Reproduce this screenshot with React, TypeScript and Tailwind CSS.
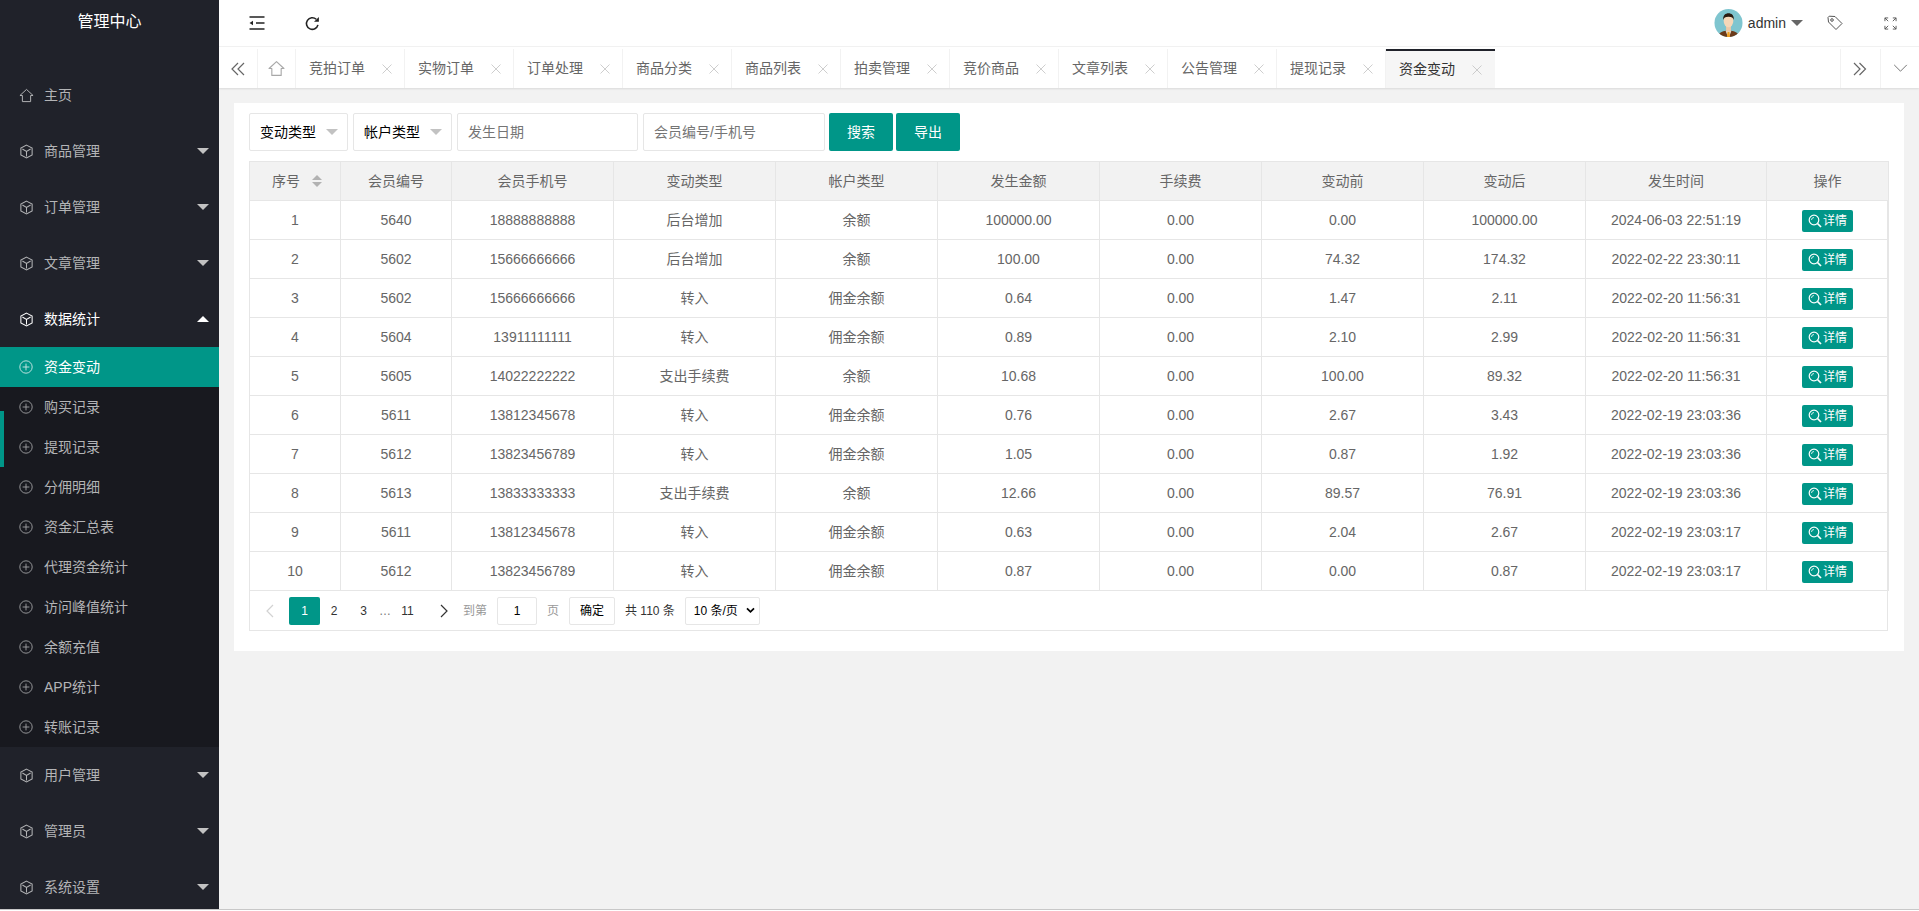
import React from "react";

const FONT = '"Liberation Sans","Noto Sans CJK SC",sans-serif';

function Cube({ className = "" }: { className?: string }) {
  return (
    <svg viewBox="0 0 16 16" className={"w-[14px] h-[15px] " + className} fill="none" stroke="currentColor" strokeWidth="1.1">
      <path d="M8 1.2 14 4.4V11.6L8 14.8 2 11.6V4.4Z" />
      <path d="M3.6 5.4 8 8l4.4-2.6M8 8v5.4" />
    </svg>
  );
}
function Plus({ className = "" }: { className?: string }) {
  return (
    <svg viewBox="0 0 14 14" className={"w-[14px] h-[14px] " + className} fill="none" stroke="currentColor" strokeWidth="0.9">
      <circle cx="7" cy="7" r="6.2" />
      <path d="M7 3.6v6.8M3.6 7h6.8" />
    </svg>
  );
}
function Home({ className = "" }: { className?: string }) {
  return (
    <svg viewBox="0 0 16 16" className={className} fill="none" stroke="currentColor" strokeWidth="1.05">
      <path d="M8 1.5 15 8h-2.6v6.5H3.6V8H1Z" strokeLinejoin="round" />
    </svg>
  );
}
function Caret({ up = false, className = "" }: { up?: boolean; className?: string }) {
  return up ? (
    <span className={"w-0 h-0 border-x-[6px] border-x-transparent border-b-[6px] " + className} />
  ) : (
    <span className={"w-0 h-0 border-x-[6px] border-x-transparent border-t-[6px] " + className} />
  );
}
function X() {
  return (
    <svg viewBox="0 0 10 10" className="w-[10px] h-[10px] text-[#c2c2c2]" fill="none" stroke="currentColor" strokeWidth="0.8">
      <path d="M0.5 0.5l9 9M9.5 0.5l-9 9" />
    </svg>
  );
}
function Chevrons({ right = false }: { right?: boolean }) {
  return (
    <svg viewBox="0 0 16 14" className="w-[16px] h-[14px] text-[#666]" fill="none" stroke="currentColor" strokeWidth="1.2">
      {right ? <path d="M2 1l6 6-6 6M7.500 1l6 6-6 6" /> : <path d="M8 1L2 7l6 6M14 1L8 7l6 6" />}
    </svg>
  );
}
function Avatar() {
  return (
    <svg viewBox="0 0 30 30" className="w-[29px] h-[30px]">
      <clipPath id="av"><circle cx="15" cy="15" r="14.500" /></clipPath>
      <g clipPath="url(#av)">
        <rect width="30" height="30" fill="#7fc5cf" />
        <path d="M4 31c0-6 4-8 11-8s11 2 11 8z" fill="#6b3a1a" />
        <path d="M12 23h6l-3 8z" fill="#e8e4d8" />
        <path d="M14 24h2l.8 7h-3.600z" fill="#f0a020" />
        <rect x="12.500" y="18" width="5" height="6" fill="#eec9a8" />
        <ellipse cx="15" cy="13" rx="5" ry="6.500" fill="#f6d7b8" />
        <path d="M9.500 12C9 7 12 5 15 5s6 2 5.500 7c-.7-2.500-2-3.500-5.500-3.500S10.200 9.500 9.500 12z" fill="#2a1a10" />
      </g>
    </svg>
  );
}

const topMenus = [
  ["商品管理", 0],
  ["订单管理", 0],
  ["文章管理", 0],
] as const;
const subMenus = ["资金变动", "购买记录", "提现记录", "分佣明细", "资金汇总表", "代理资金统计", "访问峰值统计", "余额充值", "APP统计", "转账记录"];
const tabs = ["竞拍订单", "实物订单", "订单处理", "商品分类", "商品列表", "拍卖管理", "竞价商品", "文章列表", "公告管理", "提现记录", "资金变动"];
const heads = ["序号", "会员编号", "会员手机号", "变动类型", "帐户类型", "发生金额", "手续费", "变动前", "变动后", "发生时间", "操作"];
const widths = [91, 111, 162, 162, 162, 162, 162, 162, 162, 181, 122];
const rows = [
  ["1", "5640", "18888888888", "后台增加", "余额", "100000.00", "0.00", "0.00", "100000.00", "2024-06-03 22:51:19"],
  ["2", "5602", "15666666666", "后台增加", "余额", "100.00", "0.00", "74.32", "174.32", "2022-02-22 23:30:11"],
  ["3", "5602", "15666666666", "转入", "佣金余额", "0.64", "0.00", "1.47", "2.11", "2022-02-20 11:56:31"],
  ["4", "5604", "13911111111", "转入", "佣金余额", "0.89", "0.00", "2.10", "2.99", "2022-02-20 11:56:31"],
  ["5", "5605", "14022222222", "支出手续费", "余额", "10.68", "0.00", "100.00", "89.32", "2022-02-20 11:56:31"],
  ["6", "5611", "13812345678", "转入", "佣金余额", "0.76", "0.00", "2.67", "3.43", "2022-02-19 23:03:36"],
  ["7", "5612", "13823456789", "转入", "佣金余额", "1.05", "0.00", "0.87", "1.92", "2022-02-19 23:03:36"],
  ["8", "5613", "13833333333", "支出手续费", "余额", "12.66", "0.00", "89.57", "76.91", "2022-02-19 23:03:36"],
  ["9", "5611", "13812345678", "转入", "佣金余额", "0.63", "0.00", "2.04", "2.67", "2022-02-19 23:03:17"],
  ["10", "5612", "13823456789", "转入", "佣金余额", "0.87", "0.00", "0.00", "0.87", "2022-02-19 23:03:17"],
];

function NavRow({ label, open = false, active = false }: { label: string; open?: boolean; active?: boolean }) {
  return (
    <div className={"h-[56px] flex items-center pl-[19px] pr-[10px] " + (active ? "text-white" : "text-[#b3b4b6]")}>
      <Cube className="shrink-0 w-[15px]" />
      <span className="ml-[10px] flex-1 text-[14px]">{label}</span>
      {open ? <Caret up className="border-b-white" /> : <Caret className="border-t-[#c2c2c2]" />}
    </div>
  );
}

function Select({ label }: { label: string }) {
  return (
    <div className="w-[99px] h-[38px] bg-white border border-[#e6e6e6] rounded-[2px] flex items-center pl-[10px] pr-[9px] text-[14px] text-black shrink-0">
      <span className="flex-1">{label}</span>
      <Caret className="border-t-[#c2c2c2]" />
    </div>
  );
}

export default function App() {
  return (
    <div className="w-full h-screen overflow-hidden bg-white" style={{ fontFamily: FONT }}>
      <div className="h-[910px] flex overflow-hidden bg-[#f2f2f2] border-b border-[#c8c8c8]">
        {/* Sidebar */}
        <aside className="w-[219px] shrink-0 bg-[#20222a] flex flex-col overflow-hidden relative">
          <div className="h-[44px] flex items-center justify-center text-white text-[16px] shrink-0">管理中心</div>
          <div className="h-[23px] shrink-0" />
          <div className="h-[56px] flex items-center pl-[19px] text-[#b3b4b6] shrink-0">
            <Home className="w-[15px] h-[15px]" />
            <span className="ml-[10px] text-[14px]">主页</span>
          </div>
          {topMenus.map(([l]) => (
            <div key={l} className="shrink-0"><NavRow label={l} /></div>
          ))}
          <div className="shrink-0"><NavRow label="数据统计" open active /></div>
          <div className="bg-[#18191f] shrink-0">
            {subMenus.map((s, i) => (
              <div key={s} className={"h-[40px] flex items-center pl-[19px] text-[14px] " + (i === 0 ? "bg-[#009688] text-white" : "text-[#b3b4b6]")}>
                <Plus className={i === 0 ? "text-[#cfe9e6]" : "text-[#a0a1a4]"} />
                <span className="ml-[11px]">{s}</span>
              </div>
            ))}
          </div>
          <div className="shrink-0"><NavRow label="用户管理" /></div>
          <div className="shrink-0"><NavRow label="管理员" /></div>
          <div className="shrink-0"><NavRow label="系统设置" /></div>
          <div className="absolute left-0 top-[411px] w-[4px] h-[56px] bg-[#009688]" />
        </aside>

        <div className="flex-1 min-w-0 flex flex-col">
          {/* Header */}
          <header className="h-[47px] bg-white flex items-center shrink-0 border-b border-[#f2f2f2]">
            <svg viewBox="0 0 16 14" className="w-[16px] h-[14px] ml-[30px] text-[#222]" fill="none" stroke="currentColor" strokeWidth="1.5">
              <path d="M0.500 1h15M7 7h8.500M0.500 13h15" />
              <path d="M0.500 7 4 4.800v4.400z" fill="currentColor" stroke="none" />
            </svg>
            <svg viewBox="0 0 16 16" className="w-[15px] h-[15px] ml-[40px] text-[#222]" fill="none" stroke="currentColor" strokeWidth="1.7">
              <path d="M13.800 9.500A6.200 6.200 0 1 1 12 3.500" />
              <path d="M14.800 1v5.200H9.600z" fill="currentColor" stroke="none" />
            </svg>
            <div className="flex-1" />
            <Avatar />
            <span className="ml-[5px] text-[14px] text-[#333]">admin</span>
            <Caret className="ml-[5px] border-t-[#666]" />
            <svg viewBox="0 0 16 16" className="w-[16px] h-[16px] ml-[24px] text-[#555]" fill="none" stroke="currentColor" strokeWidth="1">
              <path d="M1 2.500 2.200 1.200 8 1.500l7 7-6 6-7.500-7.500z" />
              <circle cx="5" cy="5" r="1.300" />
            </svg>
            <svg viewBox="0 0 14 14" className="w-[13px] h-[13px] ml-[41px] mr-[22px] text-[#555]" fill="none" stroke="currentColor" strokeWidth="1">
              <path d="M1 4.500V1h3.500M1 1l3.500 3.500M13 4.500V1H9.500M13 1 9.500 4.500M1 9.500V13h3.500M1 13l3.500-3.500M13 9.500V13H9.500M13 13 9.500 9.500" />
            </svg>
          </header>

          {/* Tabs */}
          <div className="h-[41px] bg-white flex shrink-0 shadow-[0_1px_2px_rgba(0,0,0,0.1)] relative z-10 pt-[2px]">
            <div className="w-[39px] flex items-center justify-center border-r border-[#f2f2f2] shrink-0"><Chevrons /></div>
            <div className="w-[38px] flex items-center justify-center border-r border-[#f2f2f2] shrink-0">
              <Home className="w-[17px] h-[17px] text-[#a8a8a8]" />
            </div>
            {tabs.map((t, i) => {
              const last = i === tabs.length - 1;
              return (
                <div
                  key={t}
                  className={
                    "w-[109px] flex items-center pl-[13px] shrink-0 text-[14px] " +
                    (last ? "bg-[#f6f6f6] text-[#333] border-t-[2px] border-[#20222a]" : "text-[#666] border-r border-[#f2f2f2]")
                  }
                >
                  <span className="w-[56px]">{t}</span>
                  <span className="ml-[17px]"><X /></span>
                </div>
              );
            })}
            <div className="flex-1" />
            <div className="w-[40px] flex items-center justify-center border-l border-[#f2f2f2] shrink-0 pr-[2px]"><Chevrons right /></div>
            <div className="w-[39px] flex items-center justify-center border-l border-[#f2f2f2] shrink-0">
              <svg viewBox="0 0 16 10" className="w-[15px] h-[9px] text-[#666]" fill="none" stroke="currentColor" strokeWidth="1">
                <path d="M1 1l7 7 7-7" />
              </svg>
            </div>
          </div>

          {/* Main */}
          <main className="flex-1 min-h-0 pt-[15px] pl-[15px] pr-[15px]">
            <div className="bg-white pl-[15px] pr-[16px] pt-[10px] pb-[20px]">
              <div className="flex h-[38px]">
                <Select label="变动类型" />
                <div className="ml-[5px]"><Select label="帐户类型" /></div>
                <div className="ml-[5px] w-[181px] border border-[#e6e6e6] rounded-[2px] flex items-center pl-[10px] text-[14px] text-[#757575]">发生日期</div>
                <div className="ml-[5px] w-[182px] border border-[#e6e6e6] rounded-[2px] flex items-center pl-[10px] text-[14px] text-[#757575]">会员编号/手机号</div>
                <button className="ml-[4px] w-[64px] bg-[#009688] text-white text-[14px] rounded-[2px]">搜索</button>
                <button className="ml-[3px] w-[64px] bg-[#009688] text-white text-[14px] rounded-[2px]">导出</button>
              </div>

              <div className="mt-[10px] w-[1639px] border border-[#e6e6e6] border-t-0">
                <table className="w-[1639px] -ml-px table-fixed border-collapse text-[14px] text-[#666]">
                  <colgroup>
                    {widths.map((w, i) => (
                      <col key={i} style={{ width: w }} />
                    ))}
                  </colgroup>
                  <thead>
                    <tr className="bg-[#f2f2f2] h-[39px]">
                      {heads.map((h, i) => (
                        <th key={h} className="border border-[#e6e6e6] font-normal p-0 text-center">
                          {i === 0 ? (
                            <span className="inline-flex items-center justify-center pl-[4px]">
                              {h}
                              <span className="ml-[12px] flex flex-col gap-[2px]">
                                <span className="w-0 h-0 border-x-[5px] border-x-transparent border-b-[5px] border-b-[#b2b2b2]" />
                                <span className="w-0 h-0 border-x-[5px] border-x-transparent border-t-[5px] border-t-[#b2b2b2]" />
                              </span>
                            </span>
                          ) : (
                            h
                          )}
                        </th>
                      ))}
                    </tr>
                  </thead>
                  <tbody>
                    {rows.map((r) => (
                      <tr key={r[0]} className="h-[39px]">
                        {r.map((c, j) => (
                          <td key={j} className="border border-[#e6e6e6] p-0 text-center">{c}</td>
                        ))}
                        <td className="border border-[#e6e6e6] p-0 text-center">
                          <span className="inline-flex items-center justify-center w-[51px] h-[22px] align-middle mt-[2px] bg-[#009688] text-white text-[12px] rounded-[2px]">
                            <svg viewBox="0 0 14 14" className="w-[14px] h-[14px] mr-[1px]" fill="none" stroke="currentColor" strokeWidth="1.2">
                              <circle cx="6" cy="6" r="4.800" />
                              <path d="M9.500 9.500 13 13" strokeWidth="1.700" />
                              <path d="M3.500 6A2.500 2.500 0 0 1 6 3.500" strokeWidth="0.800" />
                            </svg>
                            详情
                          </span>
                        </td>
                      </tr>
                    ))}
                  </tbody>
                </table>
                <div className="h-[39px] flex items-center text-[12px] text-[#333] relative">
                  <svg viewBox="0 0 8 14" className="ml-[16px] w-[8px] h-[14px] text-[#d2d2d2]" fill="none" stroke="currentColor" strokeWidth="1.200"><path d="M7 1 1 7l6 6" /></svg>
                  <span className="ml-[15px] w-[31px] h-[28px] bg-[#009688] text-white rounded-[2px] flex items-center justify-center">1</span>
                  <span className="w-[30px] text-center ml-[-1px]">2</span>
                  <span className="w-[29px] text-center">3</span>
                  <span className="w-[14px] text-center text-[#777]">…</span>
                  <span className="w-[33px] text-center ml-[-1px]">11</span>
                  <svg viewBox="0 0 8 14" className="ml-[16px] w-[8px] h-[14px] text-[#333]" fill="none" stroke="currentColor" strokeWidth="1.200"><path d="M1 1l6 6-6 6" /></svg>
                  <span className="ml-[15px] text-[#999]">到第</span>
                  <span className="ml-[10px] w-[40px] h-[28px] border border-[#e6e6e6] rounded-[2px] flex items-center justify-center text-black">1</span>
                  <span className="ml-[10px] text-[#999]">页</span>
                  <span className="ml-[10px] w-[46px] h-[28px] border border-[#e6e6e6] rounded-[2px] flex items-center justify-center text-black">确定</span>
                  <span className="ml-[10px]">共 110 条</span>
                  <span className="ml-[10px] w-[75px] h-[28px] border border-[#e6e6e6] rounded-[2px] flex items-center pl-[8px] text-black">
                    <span className="flex-1">10 条/页</span>
                    <svg viewBox="0 0 10 8" className="w-[9px] h-[7px] mr-[4px]" fill="none" stroke="currentColor" strokeWidth="2"><path d="M1 1.500l4 4 4-4" /></svg>
                  </span>
                </div>
              </div>
            </div>
          </main>
        </div>
      </div>
    </div>
  );
}
